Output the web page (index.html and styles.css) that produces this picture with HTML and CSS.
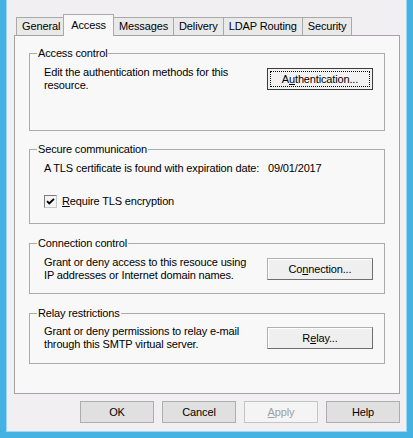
FILE: index.html
```html
<!DOCTYPE html>
<html>
<head>
<meta charset="utf-8">
<link rel="stylesheet" href="styles.css">
</head>
<body>
<div class="screen">
  <div class="dialog">
    <div class="tabs">
      <div class="tab">General</div>
      <div class="tab active">Access</div>
      <div class="tab">Messages</div>
      <div class="tab">Delivery</div>
      <div class="tab">LDAP Routing</div>
      <div class="tab">Security</div>
    </div>
    <div class="page">
      <fieldset class="group g1">
        <legend>Access control</legend>
        <div class="row">
          <div class="label">Edit the authentication methods for this<br>resource.</div>
          <div class="side">
            <button class="btn default"><span class="focus">A<u>u</u>thentication...</span></button>
          </div>
        </div>
      </fieldset>
      <fieldset class="group g2">
        <legend>Secure communication</legend>
        <div class="row line">
          <div class="label">A TLS certificate is found with expiration date:</div>
          <div class="side date">09/01/2017</div>
        </div>
        <div class="checkrow">
          <span class="check"><svg width="11" height="11" viewBox="0 0 11 11"><path d="M2 5.2 L4.3 7.5 L9 2.8" fill="none" stroke="#000" stroke-width="1.9"/></svg></span>
          <span class="checklabel"><u>R</u>equire TLS encryption</span>
        </div>
      </fieldset>
      <fieldset class="group g3">
        <legend>Connection control</legend>
        <div class="row">
          <div class="label">Grant or deny access to this resouce using<br>IP addresses or Internet domain names.</div>
          <div class="side">
            <button class="btn raised">Co<u>n</u>nection...</button>
          </div>
        </div>
      </fieldset>
      <fieldset class="group g4">
        <legend>Relay restrictions</legend>
        <div class="row">
          <div class="label">Grant or deny permissions to relay e-mail<br>through this SMTP virtual server.</div>
          <div class="side">
            <button class="btn raised">R<u>e</u>lay...</button>
          </div>
        </div>
      </fieldset>
    </div>
    <div class="actions">
      <button class="btn flat">OK</button>
      <button class="btn flat">Cancel</button>
      <button class="btn flat disabled"><u>A</u>pply</button>
      <button class="btn flat">Help</button>
    </div>
  </div>
</div>
</body>
</html>
```
FILE: styles.css
```css
* {
  box-sizing: border-box;
}

html, body {
  margin: 0;
  padding: 0;
}

body {
  font-family: "Liberation Sans", Arial, sans-serif;
  font-size: 11px;
  line-height: 13px;
  color: #000;
  letter-spacing: -0.15px;
}

.screen {
  width: 413px;
  height: 438px;
  background: #45b2e4;
  padding: 0 7px 0 7px;
  overflow: hidden;
}

.dialog {
  width: 399px;
  height: 431px;
  background: #f1eff1;
  box-shadow: 0 0 0 1px #9cd6f1;
  display: flex;
  flex-direction: column;
}

.tabs {
  height: 35px;
  display: flex;
  align-items: flex-end;
  padding-left: 9px;
}

.tab {
  height: 18px;
  padding: 0 5px;
  border: 1px solid #a9a9a9;
  border-bottom: none;
  background: #eae9ea;
  margin-right: -1px;
  display: flex;
  align-items: center;
  white-space: nowrap;
  letter-spacing: -0.13px;
}

.tab.active {
  height: 22px;
  margin: 0 -1px -1px -2px;
  padding: 0 7px 1px;
  background: #f9f8f9;
  position: relative;
  z-index: 1;
}

.page {
  margin-left: 7px;
  width: 386px;
  height: 359px;
  border: 1px solid #a3a3a3;
  background: #f9f8f9;
  padding: 11px 14px 0;
}

.group {
  margin: 0;
  min-width: 0;
  border: 1px solid #ababab;
  padding: 6px 11px 0 14px;
}

.group legend {
  margin-left: -7px;
  padding: 0 1px;
  line-height: 13px;
}

.g1 {
  padding-bottom: 38px;
  margin-bottom: 12px;
}

.g2 {
  padding-bottom: 15px;
  margin-bottom: 13px;
}

.g3 {
  padding-bottom: 11px;
  margin-bottom: 13px;
}

.g4 {
  padding-top: 5px;
  padding-bottom: 12px;
}

.row {
  display: flex;
  align-items: center;
  justify-content: space-between;
}

.label {
  white-space: nowrap;
}

.side {
  width: 106px;
  flex: none;
}

.date {
  padding-left: 1px;
}

.checkrow {
  margin-top: 20px;
  height: 13px;
  display: flex;
  align-items: center;
}

.check {
  width: 13px;
  height: 13px;
  border: 1px solid #7a7a7a;
  border-right-color: #c8c8c8;
  border-bottom-color: #c8c8c8;
  background: #f4f4f4;
  display: flex;
  align-items: center;
  justify-content: center;
  margin-right: 5px;
}

.check svg {
  display: block;
}

.btn {
  font-family: inherit;
  font-size: 11px;
  line-height: 14px;
  letter-spacing: -0.15px;
  color: #000;
  height: 22px;
  margin: 0;
  padding: 0;
  display: flex;
  align-items: center;
  justify-content: center;
}

.btn u {
  text-underline-offset: 1px;
}

.btn.default {
  width: 106px;
  border: 1px solid #3c3c3c;
  background: #f3f2f3;
  padding: 2px;
}

.btn.default .focus {
  display: flex;
  align-items: center;
  justify-content: center;
  width: 100%;
  height: 100%;
  border: 1px dotted #000;
}

.btn.raised {
  width: 106px;
  border: 1px solid #b0b0b0;
  border-right-color: #6e6e6e;
  border-bottom-color: #6e6e6e;
  background: #f0eff0;
  box-shadow: inset 1px 1px 0 #ffffff;
}

.actions {
  display: flex;
  justify-content: flex-end;
  gap: 8px;
  padding: 7px 6px 0 0;
}

.btn.flat {
  width: 74px;
  border: 1px solid #adadad;
  background: #e1e0e1;
}

.btn.flat.disabled {
  background: #f5f4f5;
  border-color: #c4c4c4;
  color: #a0a0a0;
}
```
